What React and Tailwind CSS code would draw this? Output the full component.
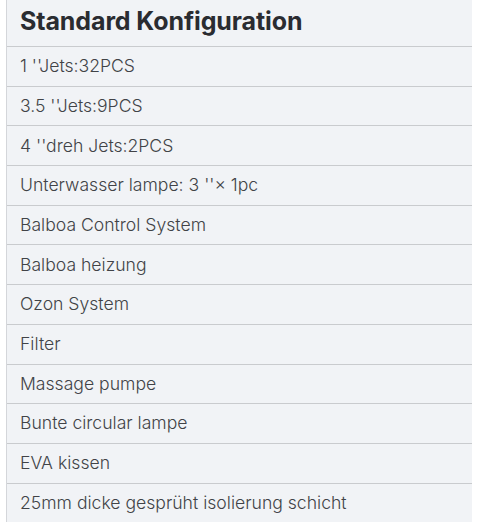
import React from 'react';

const items = [
  "1 ''Jets:32PCS",
  "3.5 ''Jets:9PCS",
  "4 ''dreh Jets:2PCS",
  "Unterwasser lampe: 3 ''× 1pc",
  'Balboa Control System',
  'Balboa heizung',
  'Ozon System',
  'Filter',
  'Massage pumpe',
  'Bunte circular lampe',
  'EVA kissen',
  '25mm dicke gesprüht isolierung schicht',
];

const App = () => {
  return (
    <div className="w-[480px] h-[522px] overflow-hidden bg-white font-['Inter',sans-serif]">
      <div className="ml-[6px] w-[466px] bg-[#f1f3f6] border-l border-[#d4d6da]">
        <div className="h-[47px] border-b border-[#c9cbce] flex items-center px-[13px] pb-[2px]">
          <h2 className="text-[25px] font-bold text-[#2a2c31] tracking-[-0.1px]">Standard Konfiguration</h2>
        </div>
        {items.map((item, idx) => (
          <div key={idx} className="h-[39.7px] border-b border-[#c9cbce] flex items-center px-[13px] text-[17.6px] font-[350] text-[#414347]">
            {item}
          </div>
        ))}
      </div>
    </div>
  );
};

export default App;
